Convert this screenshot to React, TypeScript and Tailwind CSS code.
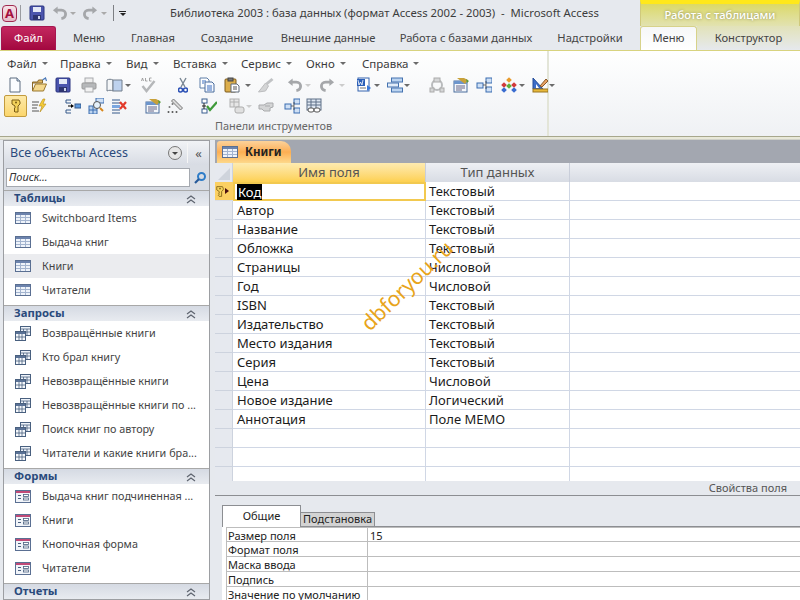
import React from "react";

type N = { children: React.ReactNode; c?: string };
const S = ({ children, c = "w-4 h-4" }: N) => (
  <svg viewBox="0 0 16 16" className={`${c} shrink-0`} fill="none">{children}</svg>
);
const Caret = ({ c = "border-t-[#6b6b6b]" }: { c?: string }) => (
  <span className={`inline-block w-0 h-0 border-x-[3px] border-x-transparent border-t-[3px] ${c}`} />
);
const Gray = "#a8aaad";

const NewDoc = () => <S><path d="M3 1h7l3 3v11H3z" fill="#fafcff" stroke="#5d6d80" /><path d="M10 1v3h3" fill="#cfe0f2" stroke="#5d6d80" /></S>;
const Open = () => <S c="w-[17px] h-4"><path d="M1 14V5h5l1-2h4v3H1" fill="#e0b765" stroke="#8a6a2a" /><path d="M1 14l3-7h11l-3 7z" fill="#f4d88e" stroke="#9a7830" /><path d="M11 3l3-2 1 3" stroke="#4a78b8" strokeWidth="1.2" /></S>;
const Save = () => <S><rect x="1" y="1" width="14" height="14" rx="1" fill="#4b55ad" stroke="#2b3480" /><rect x="4" y="2" width="8" height="5" fill="#e4e9f6" /><rect x="4" y="10" width="8" height="5" fill="#2d3470" /><rect x="9" y="11" width="2" height="3" fill="#cdd3ea" /></S>;
const Print = () => <S><rect x="4" y="1" width="8" height="5" fill="#eee" stroke={Gray} /><rect x="1" y="6" width="14" height="6" rx="1" fill="#b6b8ba" stroke="#999" /><rect x="4" y="10" width="8" height="5" fill="#f2f2f2" stroke={Gray} /></S>;
const Book = () => <S c="w-[18px] h-4"><path d="M1 3c2-1 4-1 6 0v11c-2-1-4-1-6 0z" fill="#f4f6f8" stroke="#727e8c" /><path d="M7 3h9v11H7z" fill="#bed2ee" stroke="#727e8c" /></S>;
const Spell = () => (
  <S c="w-[17px] h-4"><path d="M2 9l4 5 8-10" stroke="#b5b7b9" strokeWidth="2.5" /><path d="M1 4l1-3 1 3M5 1v3h2M11 1H9v3h2" stroke="#999" strokeWidth=".9" /></S>
);
const Cut = () => (
  <svg viewBox="0 0 10 16" className="w-[10px] h-4 shrink-0" fill="none"><path d="M2 1l5 9M8 1L3 10" stroke="#7a8794" strokeWidth="1.4" /><circle cx="2.5" cy="13" r="2" stroke="#2b50b5" strokeWidth="1.5" /><circle cx="7.5" cy="13" r="2" stroke="#2b50b5" strokeWidth="1.5" /></svg>
);
const Copy = () => <S><path d="M1 1h7l2 2v8H1z" fill="#fff" stroke="#5f7ea8" /><path d="M6 5h7l2 2v8H6z" fill="#f6f9ff" stroke="#4a6c9c" /><path d="M3 4h4M3 6h2M8 9h5M8 11h5M8 13h5" stroke="#3d6fc0" /></S>;
const Paste = () => <S><rect x="1" y="2" width="11" height="13" rx="1" fill="#dcae4c" stroke="#7d5a1c" /><rect x="4" y="1" width="5" height="3" fill="#777" stroke="#444" /><path d="M7 7h6l2 2v6H7z" fill="#fff" stroke="#5f6b7a" /><path d="M9 10h4M9 12h4" stroke="#555" /></S>;
const Brush = () => <S c="w-[17px] h-4"><path d="M14 1l2 2-6 5-2-2z" fill="#c1c3c5" /><path d="M8 6l3 3-3 5-7 1z" fill="#d4d5d6" stroke="#bcbdbf" /></S>;
const Undo = ({ flip }: { flip?: boolean }) => (
  <S c="w-[15px] h-4"><g transform={flip ? "translate(16 0) scale(-1 1)" : undefined}><path d="M4 5h6c6 0 6 8 0 9" stroke="#a5a7aa" strokeWidth="3" /><path d="M1 5l5-4v8z" fill="#a5a7aa" /></g></S>
);
const Word = () => <S><rect x="2" y="1" width="11" height="13" fill="#fff" stroke="#3463ad" /><rect x="1" y="2" width="8" height="7" fill="#2b5fb8" /><path d="M2 3l1 5 1.500-3 1.500 3 1-5" stroke="#fff" strokeWidth=".8" /><path d="M11 8l4 3-4 3z" fill="#3a78d8" /><path d="M4 11h6" stroke="#777" /></S>;
const Links = () => <S c="w-[17px] h-4"><rect x="5" y="1" width="11" height="4" fill="#bcd4f0" stroke="#4472b0" /><rect x="1" y="6" width="11" height="4" fill="#e2ecf8" stroke="#4472b0" /><rect x="5" y="11" width="11" height="4" fill="#bcd4f0" stroke="#4472b0" /></S>;
const Relations = () => (
  <S><rect x="1" y="6" width="6" height="5" fill="#cfe0f5" stroke="#3a6cb0" /><rect x="10" y="1" width="6" height="5" fill="#cfe0f5" stroke="#3a6cb0" /><rect x="10" y="10" width="6" height="5" fill="#cfe0f5" stroke="#3a6cb0" /><path d="M7 8h3M10 4v8" stroke="#333" strokeWidth=".7" /></S>
);
const Shapes = () => <S><rect x="6" y="1" width="4" height="4" transform="rotate(45 8 3)" fill="#e89b2c" /><rect x="1" y="6" width="4" height="4" transform="rotate(45 3 8)" fill="#d23a3a" /><rect x="11" y="6" width="4" height="4" transform="rotate(45 13 8)" fill="#d23a3a" /><rect x="6" y="7" width="4" height="4" transform="rotate(45 8 9)" fill="#5fb03a" /><rect x="1" y="11" width="4" height="4" transform="rotate(45 3 13)" fill="#3a6cd0" /><rect x="11" y="11" width="4" height="4" transform="rotate(45 13 13)" fill="#3a6cd0" /></S>;
const Ruler = () => <S><path d="M1 1l10 11H1z" fill="#3c6cc8" stroke="#234b98" /><path d="M4 7l3 4H4z" fill="#fff" /><rect x="1" y="12" width="15" height="3" fill="#e8b93a" stroke="#9a7520" /><path d="M8 9l6-7 2 2-6 6z" fill="#e8a060" stroke="#8a5a2a" /></S>;
const Cycle = () => <S><circle cx="8" cy="8" r="5" stroke="#b9bbbd" strokeWidth="2" /><rect x="5" y="1" width="6" height="4" fill="#d5d6d7" stroke="#aaa" /><rect x="1" y="11" width="4" height="4" fill="#d5d6d7" stroke="#aaa" /><rect x="11" y="11" width="4" height="4" fill="#d5d6d7" stroke="#aaa" /></S>;
const Prop = () => <S><rect x="1" y="4" width="13" height="11" fill="#f4f7fb" stroke="#4a6c9c" /><rect x="1" y="4" width="13" height="3" fill="#6d95cc" /><path d="M3 9h9M3 11h9M3 13h6" stroke="#668" /><path d="M4 1l8 6 3-4-4-2z" fill="#c8a13a" /><path d="M13 2l3 2-2 2z" fill="#5a9a3a" /></S>;
const KeyIc = ({ c = "w-4 h-4" }: { c?: string }) => (
  <svg viewBox="0 0 12 16" className={c} fill="none"><path d="M2 2h7l1 2v2L8 8v6H5l-1-1 1-1-1-1 1-1V8L2 6z" fill="#f4d25a" stroke="#7b5c14" /><circle cx="6" cy="4.500" r="1" fill="#7b5c14" /></svg>
);
const Rules = () => <S><path d="M1 4h7M1 7h6M1 10h5M1 13h7" stroke="#555" /><path d="M12 1L8 8h3l-2 6 6-8h-3l2-5z" fill="#f4cc3a" stroke="#b58a1a" strokeWidth=".6" /></S>;
const InsRow = () => <S><path d="M6 2H1v3h5M6 12H1v3h5" stroke="#35588a" /><path d="M3 8h4" stroke="#000" /><path d="M6 6l3 2-3 2z" fill="#000" /><rect x="10" y="6" width="6" height="4" fill="#5c9ae0" stroke="#35588a" /></S>;
const Builder = () => <S><rect x="1" y="8" width="8" height="8" fill="#bcd4f0" stroke="#3a6cb0" /><path d="M5 8v8M1 12h8" stroke="#3a6cb0" /><rect x="8" y="0" width="8" height="5" fill="#cfe0f5" stroke="#3a6cb0" /><circle cx="9" cy="7" r="3.500" fill="#e4f0fa" stroke="#555" /><path d="M12 10l3 3" stroke="#d8871a" strokeWidth="2" /></S>;
const DelRow = () => <S><path d="M1 2h8M1 5h8M1 12h8M1 15h8" stroke="#35588a" /><rect x="1" y="7" width="8" height="3" fill="#7ba7e0" /><path d="M9 4l6 7M15 4l-6 7" stroke="#e23a2a" strokeWidth="2.200" /></S>;
const Index = () => <S c="w-[17px] h-4"><path d="M7 1l9 9-2 2-9-9z" fill="#d9d9d9" stroke="#777" /><circle cx="2" cy="14" r="1" fill="#555" /><circle cx="6" cy="14" r="1" fill="#555" /><circle cx="10" cy="14" r="1" fill="#555" /><circle cx="3" cy="9" r="1" fill="#777" /><circle cx="6" cy="6" r="1" fill="#777" /></S>;
const Test = () => <S><rect x="1" y="1" width="5" height="4" fill="#fff" stroke="#3a5f90" /><rect x="1" y="11" width="5" height="4" fill="#fff" stroke="#3a5f90" /><path d="M3 5v6M1 8h4" stroke="#222" /><path d="M6 8l3 4 7-8" stroke="#3f9a3a" strokeWidth="2.200" /></S>;
const SubGray = () => <S><rect x="1" y="1" width="9" height="8" fill="#e6e6e6" stroke="#b0b0b0" /><path d="M1 4h9M5 1v8" stroke="#b0b0b0" /><rect x="6" y="9" width="9" height="6" rx="2" fill="#e0e0e0" stroke="#adadad" /></S>;
const Hands = () => <S><path d="M1 7h5l3-2h6v4l-3 1v3H6L4 11H1z" fill="#d4d5d6" stroke="#a9aaac" /><path d="M7 8h5" stroke="#a9aaac" /></S>;
const TblRel = () => <S><rect x="1" y="1" width="14" height="11" fill="#dfe7f2" stroke="#5f7188" /><path d="M1 4h14M1 7h14M5 1v11M10 1v11" stroke="#5f7188" /><rect x="2" y="10" width="6" height="4" rx="2" fill="#fff" stroke="#555" /><rect x="8" y="10" width="6" height="4" rx="2" fill="#fff" stroke="#555" /></S>;

const TableIc = () => (
  <svg viewBox="0 0 16 12" className="w-4 h-3 shrink-0">
    <rect x=".5" y=".5" width="15" height="11" fill="#eef3fa" stroke="#5a6f92" />
    <rect x="1" y="1" width="14" height="2" fill="#6c83ad" />
    <path d="M1 5.500h14M1 8.500h14M5.500 3v8M10.500 3v8" stroke="#a3b4cf" />
  </svg>
);
const QueryIc = () => (
  <svg viewBox="0 0 16 15" className="w-4 h-[15px] shrink-0">
    <rect x="5.500" y=".5" width="10" height="9" fill="#eef3fa" stroke="#49607f" />
    <path d="M5.500 3h10M8.500 3v6M12 3v6M5.500 6h10" stroke="#49607f" strokeWidth=".8" />
    <rect x=".5" y="5.500" width="10" height="9" fill="#f5f8fc" stroke="#49607f" />
    <rect x="1" y="6" width="9" height="2" fill="#5a7296" />
    <path d="M1 11h9M4 8v6M7 8v6" stroke="#49607f" strokeWidth=".8" />
  </svg>
);
const FormIc = () => (
  <svg viewBox="0 0 16 13" className="w-4 h-[13px] shrink-0">
    <rect x=".5" y=".5" width="15" height="12" fill="#f1f4f9" stroke="#5a6f92" />
    <rect x="1" y="1" width="14" height="2" fill="#c04a78" />
    <path d="M3 5.500h3M3 8.500h3" stroke="#49607f" />
    <rect x="8.500" y="4.500" width="5" height="2" fill="#fff" stroke="#49607f" strokeWidth=".8" />
    <rect x="8.500" y="8" width="5" height="2" fill="#fff" stroke="#49607f" strokeWidth=".8" />
  </svg>
);
const Chevrons = () => (
  <svg viewBox="0 0 10 10" className="w-[10px] h-[10px]" fill="none"><path d="M1 5l4-3 4 3M1 9l4-3 4 3" stroke="#5f6570" strokeWidth="1.200" /></svg>
);

const tabs: [string, string][] = [
  ["Меню", "w-[66px]"],
  ["Главная", "w-[62px]"],
  ["Создание", "w-[86px]"],
  ["Внешние данные", "w-[116px]"],
  ["Работа с базами данных", "w-[160px]"],
  ["Надстройки", "w-[88px]"],
];

const menus: [string, string][] = [
  ["Файл", "w-[53px]"], ["Правка", "w-[66px]"], ["Вид", "w-[47px]"], ["Вставка", "w-[68px]"],
  ["Сервис", "w-[65px]"], ["Окно", "w-[56px]"], ["Справка", "w-[70px]"],
];

const Group = ({ title, items, Icon }: { title: string; items: string[]; Icon: React.FC }) => (
  <div>
    <div className="h-[16px] flex items-center justify-between pl-[10px] pr-[13px] bg-gradient-to-b from-[#d5dae3] to-[#e8ebf0] border-t border-[#a8a8a8] font-bold text-[11.300px] text-[#2a4a7c]">
      <span>{title}</span>
      <Chevrons />
    </div>
    {items.map((t) => (
      <div key={t} className={`h-6 flex items-center pl-[11px] ${t === "Книги" && title === "Таблицы" ? "bg-[#ebecef]" : ""}`}>
        <span className="w-[27px] shrink-0 flex"><Icon /></span>
        <span className="whitespace-nowrap text-[#444] text-[10.800px]">{t}</span>
      </div>
    ))}
  </div>
);

const fields = [
  ["Автор", "Текстовый"], ["Название", "Текстовый"], ["Обложка", "Текстовый"], ["Страницы", "Числовой"],
  ["Год", "Числовой"], ["ISBN", "Текстовый"], ["Издательство", "Текстовый"], ["Место издания", "Текстовый"],
  ["Серия", "Текстовый"], ["Цена", "Числовой"], ["Новое издание", "Логический"], ["Аннотация", "Поле МЕМО"],
  ["", ""], ["", ""], ["", ""],
];

const props = ["Размер поля", "Формат поля", "Маска ввода", "Подпись", "Значение по умолчанию"];

export default function App() {
  return (
    <div className="w-[800px] h-[600px] overflow-hidden relative flex flex-col bg-[#e6e9ee] text-[#222]" style={{ fontFamily: '"Noto Sans", sans-serif' }}>
      {/* title bar */}
      <div className="h-[26px] flex items-center shrink-0 relative">
        <div className="ml-[2px] w-[15px] h-[17px] rounded-sm border border-[#a02a50] bg-gradient-to-b from-[#f6e4ea] to-[#e5b8c6] flex items-center justify-center text-[#a5103e] font-bold text-[13px] leading-none">A</div>
        <span className="ml-[3px] w-px h-[16px] bg-[#9a9ca0]" />
        <span className="ml-[8px]"><Save /></span>
        <span className="ml-[7px]"><Undo /></span>
        <span className="ml-[3px] flex"><Caret c="border-t-[#aaa]" /></span>
        <span className="ml-[7px]"><Undo flip /></span>
        <span className="ml-[3px] flex"><Caret c="border-t-[#aaa]" /></span>
        <span className="ml-[6px] w-px h-[16px] bg-[#7d7f83]" />
        <span className="ml-[5px] flex flex-col items-center gap-px w-[7px]"><span className="w-[7px] h-px bg-[#222]" /><Caret c="border-t-[#222]" /></span>
        <span className="ml-[44px] text-[11.300px] text-[#3c3c3c] whitespace-pre">Библиотека 2003 : база данных (формат Access 2002 - 2003)  -  Microsoft Access</span>
        <div className="ml-auto w-[160px] h-[26px] self-start border-x border-[#cfc97c] bg-gradient-to-b from-[#dcd964] to-[#e2e2b0] border-t-4 border-t-[#ffe81a] flex items-center justify-center text-[11.200px] font-medium text-white [text-shadow:0_0_3px_#8a8a50]">Работа с таблицами</div>
      </div>
      {/* tabs */}
      <div className="h-[24px] flex items-end shrink-0 text-[11.200px] text-[#444] relative">
        <div className="ml-px w-[55px] h-[24px] rounded-t-[3px] bg-gradient-to-b from-[#c4265f] to-[#a2063f] border border-[#a61650] border-b-0 text-white flex items-center justify-center">Файл</div>
        {tabs.map(([t, w]) => (
          <div key={t} className={`${w} h-[24px] flex items-center justify-center whitespace-nowrap`}>{t}</div>
        ))}
        <div className="ml-auto w-[160px] flex h-[24px]">
          <div className="w-[57px] h-[24px] rounded-t-[3px] bg-gradient-to-b from-[#f6f7f8] to-white border border-[#d7d28a] border-b-0 flex items-center justify-center relative z-10">Меню</div>
          <div className="flex-1 flex items-center justify-center bg-gradient-to-b from-[#e2e2b8] to-[#e6e9ee]">Конструктор</div>
        </div>
      </div>
      {/* ribbon */}
      <div className="h-[86px] shrink-0 flex bg-gradient-to-b from-white to-[#eff1f4] border-t border-[#d8d37f]">
        <div className="w-[549px] border-r-2 border-[#e3e5d8] flex flex-col relative">
          <div className="h-[23px] mt-px flex items-center pl-[7px] text-[11.500px] text-[#3b3b3b]">
            {menus.map(([m, w]) => (
              <span key={m} className={`${w} flex items-center gap-[5px]`}>{m}<Caret /></span>
            ))}
          </div>
          <div className="h-[20px] flex items-center pl-[7px]">
            <NewDoc /><span className="ml-[8px]"><Open /></span><span className="ml-[7px]"><Save /></span><span className="ml-[10px]"><Print /></span>
            <span className="ml-[8px]"><Book /></span><span className="ml-[2px] flex"><Caret /></span>
            <span className="ml-[9px]"><Spell /></span><span className="ml-[21px]"><Cut /></span><span className="ml-[11px]"><Copy /></span>
            <span className="ml-[9px]"><Paste /></span><span className="ml-[5px] flex"><Caret /></span>
            <span className="ml-[6px]"><Brush /></span><span className="ml-[13px]"><Undo /></span><span className="ml-[3px] flex"><Caret c="border-t-[#ccc]" /></span>
            <span className="ml-[9px]"><Undo flip /></span><span className="ml-[4px] flex"><Caret c="border-t-[#ccc]" /></span>
            <span className="ml-[11px]"><Word /></span><span className="ml-[2px] flex"><Caret /></span>
            <span className="ml-[6px]"><Links /></span><span className="ml-[1px] flex"><Caret /></span>
            <span className="ml-[19px]"><Cycle /></span><span className="ml-[8px]"><Prop /></span><span className="ml-[7px]"><Relations /></span>
            <span className="ml-[9px]"><Shapes /></span><span className="ml-[2px] flex"><Caret /></span>
            <span className="ml-[7px]"><Ruler /></span><span className="ml-[1px] flex"><Caret /></span>
          </div>
          <div className="h-[22px] flex items-center pl-[4px]">
            <span className="w-[23px] h-[22px] rounded-[2px] border border-[#c29b3e] bg-gradient-to-b from-[#fde9a8] to-[#fbd66c] flex items-center justify-center"><KeyIc c="w-3 h-4" /></span>
            <span className="ml-[4px]"><Rules /></span><span className="ml-[18px]"><InsRow /></span><span className="ml-[7px]"><Builder /></span>
            <span className="ml-[7px]"><DelRow /></span><span className="ml-[18px]"><Prop /></span><span className="ml-[5px]"><Index /></span>
            <span className="ml-[18px]"><Test /></span><span className="ml-[12px]"><SubGray /></span><span className="ml-[1px] flex"><Caret c="border-t-[#ccc]" /></span>
            <span className="ml-[6px]"><Hands /></span><span className="ml-[10px]"><Relations /></span><span className="ml-[6px]"><TblRel /></span>
          </div>
          <div className="h-[19px] flex items-center justify-center text-[10.900px] text-[#666]">Панели инструментов</div>
        </div>
        <div className="flex-1" />
      </div>
      {/* separator */}
      <div className="h-[4px] shrink-0 bg-[#e8e8d8] border-t border-[#a7a78c] border-b border-b-[#cfd0c8]" />
      {/* body */}
      <div className="flex-1 flex min-h-0">
        {/* nav */}
        <div className="ml-[3px] w-[207px] shrink-0 bg-white border border-[#9c9ea2] overflow-hidden flex flex-col">
          <div className="h-[24px] shrink-0 flex items-center pl-[6px] bg-gradient-to-b from-[#f1f3f6] to-[#d8dce4] text-[12.500px] text-[#2a4a7c]">
            <span>Все объекты Access</span>
            <span className="ml-auto w-[14px] h-[14px] rounded-full border border-[#777] bg-[#e6e6e6] flex items-center justify-center"><Caret c="border-t-[#444]" /></span>
            <span className="ml-[5px] w-px h-[20px] bg-[#f6f6f6]" />
            <span className="w-[21px] text-center text-[13px] leading-none text-[#555]">«</span>
          </div>
          <div className="h-[25px] shrink-0 flex items-center pl-[2px] bg-[#d9dde4]">
            <div className="w-[184px] h-[19px] bg-white border border-[#a5a9b0] flex items-center pl-[2px] italic text-[11px] text-[#333]">Поиск...</div>
            <svg viewBox="0 0 14 14" className="w-[14px] h-[14px] ml-[3px]" fill="none"><circle cx="8.500" cy="5.500" r="3.500" stroke="#2f7dc8" strokeWidth="2" /><path d="M6 8l-4 4" stroke="#265a9a" strokeWidth="2.200" /></svg>
          </div>
          <Group title="Таблицы" items={["Switchboard Items", "Выдача книг", "Книги", "Читатели"]} Icon={TableIc} />
          <div className="h-[3px] shrink-0" />
          <Group title="Запросы" items={["Возвращённые книги", "Кто брал книгу", "Невозвращённые книги", "Невозвращённые книги по ...", "Поиск книг по автору", "Читатели и какие книги бра..."]} Icon={QueryIc} />
          <div className="h-[3px] shrink-0" />
          <Group title="Формы" items={["Выдача книг подчиненная ...", "Книги", "Кнопочная форма", "Читатели"]} Icon={FormIc} />
          <div className="h-[3px] shrink-0" />
          <Group title="Отчеты" items={[]} Icon={FormIc} />
        </div>
        {/* main */}
        <div className="ml-[5px] flex-1 flex flex-col min-w-0">
          <div className="h-[23px] shrink-0 bg-[#a3a7b0] flex items-end pl-[2px]">
            <div className="w-[74px] h-[22px] rounded-tr-[10px] rounded-tl-[3px] bg-gradient-to-b from-[#fcd29a] via-[#fcae52] to-[#fdd88a] flex items-center pl-[5px] gap-[7px] font-bold text-[11.500px] text-[#222]">
              <TableIc />Книги
            </div>
          </div>
          <div className="h-[19px] shrink-0 flex text-[13px] text-[#555] bg-white">
            <div className="w-[18px] bg-[#e6e9ef] border-r border-[#cdd3de] relative"><span className="absolute right-[2px] bottom-[2px] w-0 h-0 border-l-[12px] border-l-transparent border-b-[12px] border-b-[#cfd4dc]" /></div>
            <div className="w-[193px] flex items-center justify-center bg-gradient-to-b from-[#feebb0] to-[#fdd04f] border-r border-[#c9ceda]">Имя поля</div>
            <div className="w-[144px] flex items-center justify-center bg-gradient-to-b from-[#eef0f4] to-[#d8dce4] border-r border-[#c9ceda]">Тип данных</div>
            <div className="flex-1 bg-gradient-to-b from-[#eef0f4] to-[#d8dce4]" />
          </div>
          {/* grid */}
          <div className="h-[299px] shrink-0 overflow-hidden bg-white text-[13px] text-[#1b1b1b]">
            <div className="flex h-[19px]">
              <div className="w-[18px] bg-[#fbd062] border-b border-[#d9dde6] flex items-center"><KeyIc c="w-[10px] h-[13px]" /><span className="w-0 h-0 border-y-[3px] border-y-transparent border-l-[4px] border-l-[#4a1010]" /></div>
              <div className="w-[193px] border-2 border-[#f2c94f] flex items-center pl-[2px]"><span className="bg-black text-white px-px leading-[16px]">Код</span></div>
              <div className="w-[144px] border-r border-b border-[#d0d7e5] flex items-center pl-[3px] pt-px">Текстовый</div>
              <div className="flex-1 border-b border-[#d0d7e5]" />
            </div>
            {fields.map(([a, b], i) => (
              <div key={i} className="flex h-[19px]">
                <div className="w-[18px] bg-[#e6e9ef] border-b border-r border-[#cdd3de]" />
                <div className="w-[193px] border-r border-b border-[#d0d7e5] flex items-center pl-[4px] pt-px">{a}</div>
                <div className="w-[144px] border-r border-b border-[#d0d7e5] flex items-center pl-[3px] pt-px">{b}</div>
                <div className="flex-1 border-b border-[#d0d7e5]" />
              </div>
            ))}
          </div>
          {/* properties */}
          <div className="h-[15px] shrink-0 flex items-center justify-end pr-[13px] text-[11px] text-[#555] border-b border-[#8c8e92]">Свойства поля</div>
          <div className="flex-1 min-h-0 flex flex-col">
            <div className="h-[31px] shrink-0 flex items-end pl-[7px] text-[11px]">
              <div className="w-[79px] h-[22px] bg-white border border-b-0 border-[#8c8e92] flex items-center justify-center">Общие</div>
              <div className="w-[74px] h-[15px] bg-[#d3d3d3] border-t border-r border-b border-[#8c8e92] flex items-center justify-center">Подстановка</div>
              <div className="flex-1 h-px bg-[#8c8e92]" />
            </div>
            <div className="flex-1 ml-[7px] bg-white pl-[4px] text-[11px] overflow-hidden">
              {props.map((p, i) => (
                <div key={p} className={`flex h-[15px] border-b border-[#bdbdbd] -mr-px ${i === 0 ? "border-t" : ""}`}>
                  <div className="w-[142px] border-r border-[#bdbdbd] border-l pl-px leading-[15px] whitespace-nowrap">{p}</div>
                  <div className="flex-1 pl-[2px] leading-[15px]">{i === 0 ? "15" : ""}</div>
                </div>
              ))}
            </div>
          </div>
        </div>
      </div>
      {/* watermark */}
      <div className="absolute left-[347px] top-[275px] w-[120px] text-center -rotate-[44deg] text-[#e8a41a] text-[21px] leading-none whitespace-nowrap">dbforyou.ru</div>
    </div>
  );
}
